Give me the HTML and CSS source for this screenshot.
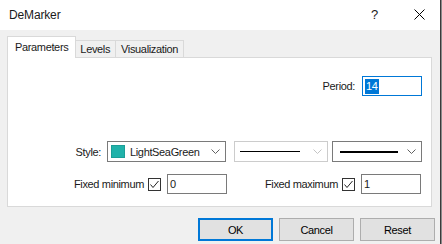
FILE: index.html
```html
<!DOCTYPE html>
<html lang="en">
<head>
    <meta charset="UTF-8">
    <title>DeMarker</title>
    <link rel="stylesheet" href="styles.css">
</head>
<body>
    <div class="window">
        <div class="titlebar">
            <span class="title">DeMarker</span>
            <span class="help">?</span>
            <span class="close">
                <svg width="11" height="11" viewBox="0 0 11 11"><path d="M0.5 0.5 L10.5 10.5 M10.5 0.5 L0.5 10.5" stroke="#000" stroke-width="1" fill="none"/></svg>
            </span>
        </div>

        <div class="client">
            <div class="tabs">
                <div class="tab active">Parameters</div>
                <div class="tab">Levels</div>
                <div class="tab">Visualization</div>
            </div>

            <div class="panel">
                <div class="row period-row">
                    <span class="label">Period:</span>
                    <div class="edit focused"><span class="selected">14</span></div>
                </div>

                <div class="row style-row">
                    <span class="label style-label">Style:</span>
                    <div class="combo color-combo">
                        <span class="swatch"></span>
                        <span class="combo-text">LightSeaGreen</span>
                        <svg class="chevron" width="9" height="5" viewBox="0 0 9 5"><path d="M0.5 0.5 L4.5 4.5 L8.5 0.5" stroke="#606060" fill="none"/></svg>
                    </div>
                    <div class="combo line-combo disabled">
                        <span class="line thin"></span>
                        <svg class="chevron" width="9" height="5" viewBox="0 0 9 5"><path d="M0.5 0.5 L4.5 4.5 L8.5 0.5" stroke="#c4c4c4" fill="none"/></svg>
                    </div>
                    <div class="combo width-combo">
                        <span class="line thick"></span>
                        <svg class="chevron" width="9" height="5" viewBox="0 0 9 5"><path d="M0.5 0.5 L4.5 4.5 L8.5 0.5" stroke="#606060" fill="none"/></svg>
                    </div>
                </div>

                <div class="row fixed-row">
                    <span class="label fixed-min">Fixed minimum</span>
                    <span class="checkbox">
                        <svg width="11" height="11" viewBox="0 0 11 11"><path d="M1.5 5.5 L4 8.5 L9.5 2" stroke="#222" fill="none"/></svg>
                    </span>
                    <div class="edit">0</div>
                    <span class="label fixed-max">Fixed maximum</span>
                    <span class="checkbox">
                        <svg width="11" height="11" viewBox="0 0 11 11"><path d="M1.5 5.5 L4 8.5 L9.5 2" stroke="#222" fill="none"/></svg>
                    </span>
                    <div class="edit">1</div>
                </div>
            </div>

            <div class="buttons">
                <button class="btn default">OK</button>
                <button class="btn">Cancel</button>
                <button class="btn">Reset</button>
            </div>
        </div>
    </div>
</body>
</html>
```

FILE: styles.css
```css
body {
    margin: 0;
    background: #8a8a8a;
    font-family: "Liberation Sans", Arial, sans-serif;
    font-size: 11px;
    letter-spacing: -0.35px;
    color: #1a1a1a;
}

.window {
    width: 440px;
    height: 244px;
    border-right: 1px solid #3a3a3a;
    display: flex;
    flex-direction: column;
    overflow: hidden;
}

.titlebar {
    height: 30px;
    flex-shrink: 0;
    background: #fff;
    display: flex;
    align-items: center;
}

.title {
    margin-left: 9px;
    font-size: 12px;
    letter-spacing: -0.15px;
    flex: 1;
    margin-top: -1px;
}

.help {
    font-size: 13px;
    margin-right: 36px;
    margin-top: -1px;
}

.close {
    width: 11px;
    height: 11px;
    margin-right: 15px;
    margin-top: -1px;
}

.close svg {
    display: block;
}

.client {
    flex: 1;
    background: #f0f0f0;
    padding: 7px 7px 0 7px;
    display: flex;
    flex-direction: column;
}

.tabs {
    height: 20px;
    flex-shrink: 0;
    display: flex;
    align-items: flex-end;
    position: relative;
    z-index: 1;
}

.tab {
    height: 16px;
    line-height: 16px;
    padding: 0 5px;
    border: 1px solid #d9d9d9;
    border-bottom: none;
    background: #f0f0f0;
    margin-left: -1px;
}

.tab:first-child {
    margin-left: 0;
}

.tab.active {
    height: 21px;
    line-height: 20px;
    padding: 0 7px;
    background: #fff;
    margin-bottom: -1px;
    margin-right: -1px;
    position: relative;
    z-index: 2;
}

.panel {
    box-sizing: border-box;
    height: 150px;
    flex-shrink: 0;
    background: #fff;
    border: 1px solid #d9d9d9;
    padding: 18px 9px 0 0;
    display: flex;
    flex-direction: column;
    margin-right: 1px;
}

.row {
    display: flex;
    align-items: center;
    justify-content: flex-end;
}

.period-row {
    height: 20px;
}

.period-row .label {
    margin-right: 7px;
}

.edit {
    box-sizing: border-box;
    width: 60px;
    height: 20px;
    border: 1px solid #7a7a7a;
    background: #fff;
    padding: 0 2px;
    line-height: 18px;
    margin-left: 6px;
}

.period-row .edit {
    margin-left: 0;
}

.edit.focused {
    border-color: #0078d7;
}

.selected {
    background: #0078d7;
    color: #fff;
    display: inline-block;
    height: 15px;
    line-height: 15px;
    padding: 0 1px;
}

.style-row {
    height: 21px;
    margin-top: 45px;
}

.style-label {
    margin-right: 6px;
}

.combo {
    box-sizing: border-box;
    height: 21px;
    border: 1px solid #7a7a7a;
    background: #fff;
    display: flex;
    align-items: center;
    position: relative;
}

.combo.disabled {
    border-color: #cccccc;
}

.color-combo {
    width: 119px;
}

.line-combo {
    width: 94px;
    margin-left: 8px;
}

.width-combo {
    width: 90px;
    margin-left: 4px;
}

.swatch {
    width: 12px;
    height: 11px;
    background: #20b2aa;
    border: 1px solid #1c9e97;
    margin-left: 3px;
}

.combo-text {
    margin-left: 5px;
    flex: 1;
}

.chevron {
    position: absolute;
    right: 5px;
    top: 7px;
}

.line {
    display: block;
    background: #000;
}

.line.thin {
    width: 60px;
    height: 1px;
    margin-left: 5px;
}

.line.thick {
    width: 58px;
    height: 2px;
    margin-left: 7px;
}

.fixed-row {
    height: 20px;
    margin-top: 12px;
    margin-right: 1px;
}

.fixed-min,
.fixed-max {
    text-align: right;
}

.fixed-min {
    width: 86px;
}

.fixed-max {
    width: 111px;
}

.checkbox {
    box-sizing: border-box;
    width: 13px;
    height: 13px;
    border: 1px solid #333;
    background: #fff;
    margin-left: 4px;
}

.checkbox svg {
    display: block;
}

.buttons {
    display: flex;
    justify-content: flex-end;
    gap: 6px;
    margin-top: 11px;
    margin-right: -2px;
}

.btn {
    box-sizing: border-box;
    width: 75px;
    height: 23px;
    background: #e1e1e1;
    border: 1px solid #adadad;
    font-family: "Liberation Sans", Arial, sans-serif;
    font-size: 11px;
    letter-spacing: -0.35px;
    color: #000;
    padding: 0;
}

.btn.default {
    border: 2px solid #0078d7;
}
```
